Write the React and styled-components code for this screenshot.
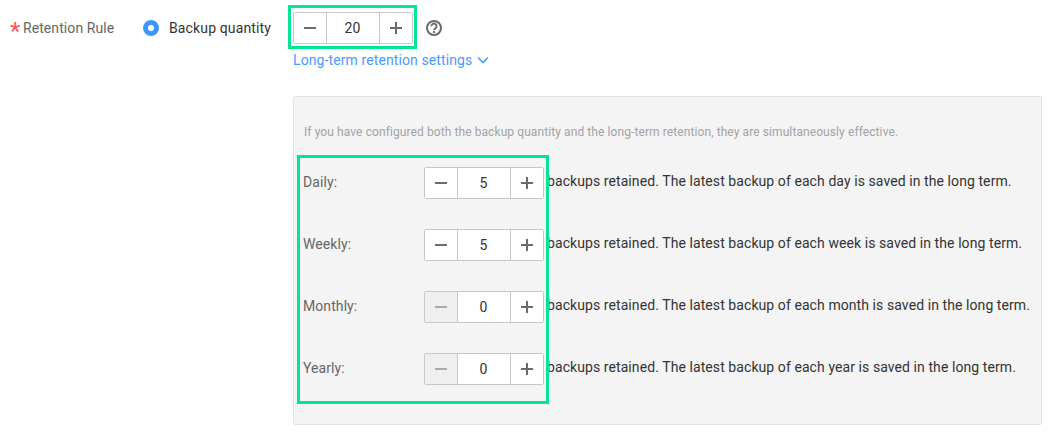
import React from 'react';
import styled, { createGlobalStyle } from 'styled-components';

const GlobalStyle = createGlobalStyle`
  html, body {
    margin: 0;
    padding: 0;
    background: #fff;
    font-family: Roboto, "Liberation Sans", sans-serif;
  }
`;

const Page = styled.div`
  width: 1058px;
  height: 438px;
  padding: 12px 0 0 10px;
  box-sizing: border-box;
  overflow: hidden;
  letter-spacing: 0.08px;
`;
const TopRow = styled.div`
  display: flex;
  align-items: center;
  height: 32px;
`;
const RuleLabel = styled.div`
  width: 133px;
  display: flex;
  align-items: center;
  font-size: 14px;
  color: #666;
`;
const Star = styled.span`
  width: 13px;
  height: 14px;
  font-size: 24px;
  line-height: 20px;
  color: #f5555e;
`;
const RadioOption = styled.div`
  width: 150px;
  display: flex;
  align-items: center;
  font-size: 14px;
  letter-spacing: 0.13px;
  color: #333;
`;
const RadioDot = styled.span`
  width: 16px;
  height: 16px;
  border-radius: 50%;
  box-sizing: border-box;
  border: 5px solid #3d96fb;
  background: #fff;
  margin-right: 10px;
`;
const Highlight = styled.div`
  position: relative;
  &::after {
    content: '';
    position: absolute;
    pointer-events: none;
    border: 3px solid #00e596;
    left: ${p => p.$left}px;
    top: ${p => p.$top}px;
    width: ${p => p.$width}px;
    height: ${p => p.$height}px;
    box-sizing: border-box;
  }
`;
const Stepper = styled.div`
  display: flex;
  width: 120px;
  height: 32px;
  box-sizing: border-box;
  border: 1px solid #c8c8c8;
  border-radius: 2px;
  background: #fff;
`;
const StepButton = styled.div`
  width: 33px;
  box-sizing: border-box;
  display: flex;
  align-items: center;
  justify-content: center;
  color: ${p => (p.$disabled ? '#aaa' : '#6b6b6b')};
  background: ${p => (p.$disabled ? '#efefef' : '#fff')};
  border-${p => (p.$side === 'left' ? 'right' : 'left')}: 1px solid #c8c8c8;
`;
const StepValue = styled.div`
  flex: 1;
  padding-right: 1px;
  text-align: center;
  line-height: 30px;
  font-size: 14px;
  color: #333;
`;
const HelpIcon = styled.svg`
  width: 18px;
  height: 18px;
  margin-left: 12px;
  color: #6a6a6a;
`;
const ControlColumn = styled.div`
  margin-left: 283px;
`;
const ExpandLink = styled.div`
  display: flex;
  align-items: center;
  height: 32px;
  font-size: 14px;
  letter-spacing: 0.1px;
  color: #4a9bfb;
  svg {
    margin-left: 5px;
  }
`;
const Panel = styled.div`
  width: 749px;
  height: 329px;
  margin-top: 20px;
  box-sizing: border-box;
  padding: 28px 0 0 10px;
  background: #f4f4f4;
  border: 1px solid #e3e3e3;
  border-radius: 2px;
`;
const Hint = styled.div`
  font-size: 12px;
  line-height: 14px;
  letter-spacing: 0.09px;
  color: #a3a3a3;
`;
const Rows = styled.div`
  margin-top: 28px;
  display: flex;
  flex-direction: column;
  gap: 30px;
`;
const Row = styled.div`
  display: flex;
  align-items: center;
  height: 32px;
`;
const RowLabel = styled.div`
  width: 120px;
  font-size: 14px;
  color: #666;
  position: relative;
  top: -1px;
  left: -1px;
`;
const RowText = styled.div`
  margin-left: 3px;
  font-size: 14px;
  color: #333;
  white-space: nowrap;
  position: relative;
  top: -2px;
`;

const Minus = () => (
  <svg width="12" height="12" viewBox="0 0 12 12">
    <rect x="0" y="5" width="12" height="2" fill="currentColor" />
  </svg>
);
const Plus = () => (
  <svg width="12" height="12" viewBox="0 0 12 12">
    <path d="M0 5h5V0h2v5h5v2H7v5H5V7H0z" fill="currentColor" />
  </svg>
);

const NumberStepper = ({ value, minDisabled }) => (
  <Stepper>
    <StepButton $side="left" $disabled={minDisabled}><Minus /></StepButton>
    <StepValue>{value}</StepValue>
    <StepButton $side="right"><Plus /></StepButton>
  </Stepper>
);

const periods = [
  { label: 'Daily:', value: 5, unit: 'day' },
  { label: 'Weekly:', value: 5, unit: 'week' },
  { label: 'Monthly:', value: 0, unit: 'month' },
  { label: 'Yearly:', value: 0, unit: 'year' },
];

const App = () => (
  <Page>
    <GlobalStyle />
    <TopRow>
      <RuleLabel><Star>*</Star>Retention Rule</RuleLabel>
      <RadioOption><RadioDot />Backup quantity</RadioOption>
      <Highlight $left={-5} $top={-7} $width={129} $height={44}>
        <NumberStepper value={20} />
      </Highlight>
      <HelpIcon viewBox="0 0 18 18">
        <circle cx="9" cy="9" r="7" fill="none" stroke="currentColor" strokeWidth="2" />
        <path d="M6.4 7.3a2.6 2.6 0 1 1 4 2.1c-.9.6-1.4 1-1.4 1.9" fill="none" stroke="currentColor" strokeWidth="1.9" />
        <rect x="8" y="12.1" width="2" height="1.9" fill="currentColor" />
      </HelpIcon>
    </TopRow>
    <ControlColumn>
      <ExpandLink>
        Long-term retention settings
        <svg width="12" height="8" viewBox="0 0 12 8">
          <path d="M1 1.5l5 5 5-5" fill="none" stroke="currentColor" strokeWidth="1.6" />
        </svg>
      </ExpandLink>
      <Panel>
        <Hint>If you have configured both the backup quantity and the long-term retention, they are simultaneously effective.</Hint>
        <Highlight $left={-7} $top={-12} $width={252} $height={249}>
          <Rows>
            {periods.map(p => (
              <Row key={p.unit}>
                <RowLabel>{p.label}</RowLabel>
                <NumberStepper value={p.value} minDisabled={p.value === 0} />
                <RowText>backups retained. The latest backup of each {p.unit} is saved in the long term.</RowText>
              </Row>
            ))}
          </Rows>
        </Highlight>
      </Panel>
    </ControlColumn>
  </Page>
);

export default App;
